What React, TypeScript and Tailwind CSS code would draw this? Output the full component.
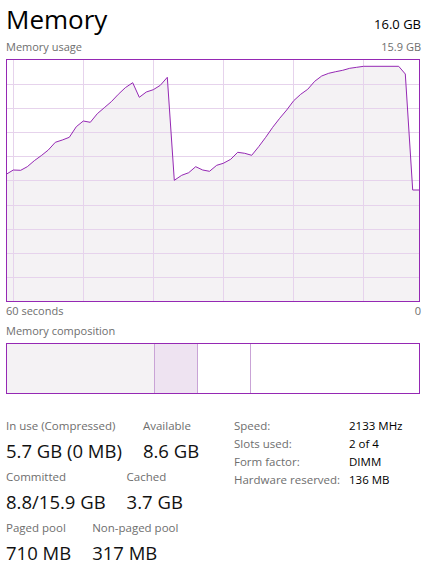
const usage: [number, number][] = [
  [6.7, 174], [13.3, 170], [20.7, 170.3], [27.3, 166.7], [34.3, 160.7], [41.7, 155.3],
  [48.3, 150], [55.3, 142.3], [62.3, 140], [69.3, 137.3], [76.3, 126.7], [83.3, 121],
  [90.3, 122.3], [97.3, 113.7], [104.3, 107.7], [111.3, 101.7], [118.3, 94.3], [125.3, 87.7],
  [132.7, 82.7], [139.3, 97.3], [146.3, 92], [153.3, 89.7], [160.3, 85.3], [167.3, 77.3],
  [174.3, 180.3], [181.7, 175.3], [188.7, 172.7], [195.7, 166.7], [202.7, 170], [209.5, 171.3],
  [216.7, 165.3], [223.3, 163.3], [230.7, 159.3], [237.7, 152.3], [244.7, 153.3], [251.7, 155.3],
  [258.7, 146.7], [265.7, 137.3], [272.7, 127.3], [279.7, 118.3], [286.7, 110], [293.7, 100.7],
  [300.7, 94.3], [307.7, 89.3], [314.7, 81.3], [321.7, 76], [328.7, 73.3], [335.7, 71.7],
  [342.7, 70.3], [349.7, 68.3], [356.7, 67.3], [363.7, 66.3], [398.7, 66.3], [405.3, 74],
  [412.7, 190], [419.5, 190],
];

const rows = [84.5, 108.5, 132.5, 156.5, 180.5, 205.5, 229.5, 253.5, 277.5];
const cols = [13.5, 83.5, 153.5, 223.5, 293.5, 363.5];

function UsageChart() {
  const pts = usage.map(([x, y]) => `${x},${y}`).join(" ");
  return (
    <svg width={414} height={243} viewBox="6 59 414 243" className="block">
      <rect x={6} y={59} width={414} height={243} fill="#ffffff" />
      <polygon points={`${pts} 419.5,301.5 6.5,301.5`} fill="#f4f2f4" />
      {rows.map((y) => (
        <line key={y} x1={6} x2={420} y1={y} y2={y} stroke="#e6d3ec" strokeWidth={1} />
      ))}
      {cols.map((x) => (
        <line key={x} x1={x} x2={x} y1={59} y2={302} stroke="#e6d3ec" strokeWidth={1} />
      ))}
      <polyline points={pts} fill="none" stroke="#9528b4" strokeWidth={1} strokeLinejoin="round" />
      <rect x={6.5} y={59.5} width={413} height={242} fill="none" stroke="#9528b4" strokeWidth={1} />
    </svg>
  );
}

function Stat({ label, value }: { label: string; value: string }) {
  return (
    <div className="flex flex-col">
      <span className="text-[11.5px] leading-[16px] text-[#6e6e6e]">{label}</span>
      <span className="mt-[5px] text-[18.5px] leading-[24px] text-[#111111]">{value}</span>
    </div>
  );
}

export default function App() {
  return (
    <div
      className="h-[567px] w-[429px] overflow-hidden bg-white px-[6px] text-black"
      style={{ fontFamily: '"Open Sans", "Noto Sans", sans-serif' }}
    >
      <div className="flex items-baseline justify-between pt-[2px]">
        <span className="text-[26px] leading-[34px]">Memory</span>
        <span className="pr-[2px] text-[13px] leading-[18px]">16.0 GB</span>
      </div>
      <div className="mt-[3px] flex justify-between pr-[2px] text-[11px] leading-[16px] text-[#6e6e6e]">
        <span>Memory usage</span>
        <span>15.9 GB</span>
      </div>
      <div className="mt-[4px]">
        <UsageChart />
      </div>
      <div className="mt-[1px] flex justify-between pr-[2px] text-[11px] leading-[16px] text-[#6e6e6e]">
        <span>60 seconds</span>
        <span>0</span>
      </div>
      <div className="mt-[4px] text-[11px] leading-[16px] text-[#6e6e6e]">Memory composition</div>
      <div className="mt-[4px] flex h-[51px] w-[414px] border border-[#9528b4]">
        <div className="w-[148px] border-r border-[#c9a3d6] bg-[#f4f2f4]" />
        <div className="w-[43px] border-r border-[#c9a3d6] bg-[#eee3f1]" />
        <div className="w-[53px] border-r border-[#c9a3d6] bg-white" />
        <div className="flex-1 bg-white" />
      </div>
      <div className="mt-[24px] flex items-start">
        <div className="flex w-[228px] flex-col gap-[6px]">
          <div className="flex gap-[21px]">
            <Stat label="In use (Compressed)" value="5.7 GB (0 MB)" />
            <Stat label="Available" value="8.6 GB" />
          </div>
          <div className="flex gap-[21px]">
            <Stat label="Committed" value="8.8/15.9 GB" />
            <Stat label="Cached" value="3.7 GB" />
          </div>
          <div className="flex gap-[21px]">
            <Stat label="Paged pool" value="710 MB" />
            <Stat label="Non-paged pool" value="317 MB" />
          </div>
        </div>
        <div className="grid grid-cols-[115px_auto] gap-y-[2px] text-[11.5px] leading-[16px]">
          <span className="text-[#6e6e6e]">Speed:</span>
          <span>2133 MHz</span>
          <span className="text-[#6e6e6e]">Slots used:</span>
          <span>2 of 4</span>
          <span className="text-[#6e6e6e]">Form factor:</span>
          <span>DIMM</span>
          <span className="text-[#6e6e6e]">Hardware reserved:</span>
          <span>136 MB</span>
        </div>
      </div>
    </div>
  );
}
